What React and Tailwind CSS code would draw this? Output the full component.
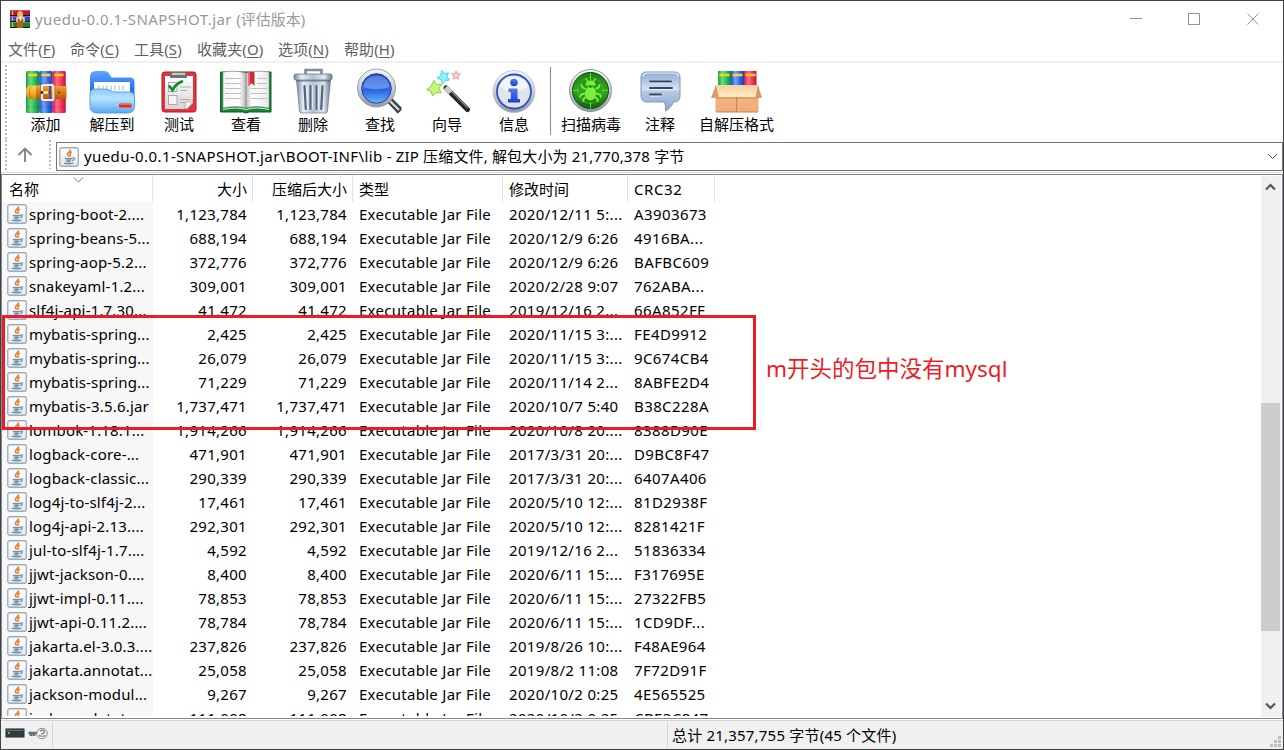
import React from "react";

const files = [
  ["spring-boot-2....", "1,123,784", "2020/12/11 5:...", "A3903673"],
  ["spring-beans-5...", "688,194", "2020/12/9 6:26", "4916BA..."],
  ["spring-aop-5.2...", "372,776", "2020/12/9 6:26", "BAFBC609"],
  ["snakeyaml-1.2...", "309,001", "2020/2/28 9:07", "762ABA..."],
  ["slf4j-api-1.7.30...", "41,472", "2019/12/16 2...", "66A852FF"],
  ["mybatis-spring...", "2,425", "2020/11/15 3:...", "FE4D9912"],
  ["mybatis-spring...", "26,079", "2020/11/15 3:...", "9C674CB4"],
  ["mybatis-spring...", "71,229", "2020/11/14 2...", "8ABFE2D4"],
  ["mybatis-3.5.6.jar", "1,737,471", "2020/10/7 5:40", "B38C228A"],
  ["lombok-1.18.1...", "1,914,266", "2020/10/8 20:...", "8388D90E"],
  ["logback-core-...", "471,901", "2017/3/31 20:...", "D9BC8F47"],
  ["logback-classic...", "290,339", "2017/3/31 20:...", "6407A406"],
  ["log4j-to-slf4j-2...", "17,461", "2020/5/10 12:...", "81D2938F"],
  ["log4j-api-2.13....", "292,301", "2020/5/10 12:...", "8281421F"],
  ["jul-to-slf4j-1.7....", "4,592", "2019/12/16 2...", "51836334"],
  ["jjwt-jackson-0....", "8,400", "2020/6/11 15:...", "F317695E"],
  ["jjwt-impl-0.11....", "78,853", "2020/6/11 15:...", "27322FB5"],
  ["jjwt-api-0.11.2....", "78,784", "2020/6/11 15:...", "1CD9DF..."],
  ["jakarta.el-3.0.3....", "237,826", "2019/8/26 10:...", "F48AE964"],
  ["jakarta.annotat...", "25,058", "2019/8/2 11:08", "7F72D91F"],
  ["jackson-modul...", "9,267", "2020/10/2 0:25", "4E565525"],
  ["jackson-dataty...", "111,008", "2020/10/2 0:25", "CBE3C847"],
];

const menus = [
  ["文件", "F", "w-[62px]"],
  ["命令", "C", "w-[64px]"],
  ["工具", "S", "w-[63px]"],
  ["收藏夹", "O", "w-[81px]"],
  ["选项", "N", "w-[66px]"],
  ["帮助", "H", "w-[60px]"],
];

function Gradients() {
  const g = (id, stops, horizontal) => (
    <linearGradient id={id} x1="0" y1="0" x2={horizontal ? "1" : "0"} y2={horizontal ? "0" : "1"}>
      {stops.map(([o, c]) => (
        <stop key={o} offset={o} stopColor={c} />
      ))}
    </linearGradient>
  );
  return (
    <svg className="absolute h-0 w-0" aria-hidden="true">
      <defs>
        {g("green", [[0, "#1fa045"], [0.35, "#5fe07d"], [0.7, "#24b852"], [1, "#128636"]], true)}
        {g("blue", [[0, "#2450d0"], [0.35, "#6fa5ff"], [0.7, "#2f63ea"], [1, "#1d40b4"]], true)}
        {g("red", [[0, "#d01c44"], [0.35, "#ff6f86"], [0.7, "#f0305a"], [1, "#bd1738"]], true)}
        {g("belt", [[0, "#f2a33c"], [0.4, "#e07f14"], [1, "#b05a0a"]])}
        {g("tongue", [[0, "#ffd257"], [0.6, "#f6a92b"], [1, "#d77f10"]])}
        {g("folderBack", [[0, "#5aa9ff"], [0.6, "#2d68ee"], [1, "#3a7cf0"]])}
        {g("folderFront", [[0, "#8cc9fc"], [0.4, "#b5e4ff"], [1, "#58a8ee"]])}
        {g("paper", [[0, "#ffffff"], [1, "#d4d4d4"]])}
        {g("pageL", [[0, "#f3f3f3"], [0.7, "#ffffff"], [1, "#b9b9b9"]], true)}
        {g("pageR", [[0, "#b9b9b9"], [0.25, "#ffffff"], [1, "#e9e9e9"]], true)}
        {g("steel", [[0, "#76869b"], [0.2, "#e6edf5"], [0.5, "#b4c1d0"], [0.8, "#dde6ef"], [1, "#68788d"]], true)}
        {g("lens", [[0, "#2147bd"], [0.45, "#3f78e8"], [0.55, "#2b62df"], [1, "#66b5ff"]])}
        {g("ring", [[0, "#f4f6f8"], [0.5, "#c9ced5"], [1, "#9199a4"]])}
        {g("bubble", [[0, "#8fabd2"], [0.45, "#d5e2f3"], [0.5, "#b5c9e5"], [1, "#8ba5cb"]])}
        {g("box", [[0, "#f2b888"], [1, "#f0ac78"]])}
        {g("flap", [[0, "#f6cfa0"], [1, "#fdebc4"]])}
        {g("infoBlue", [[0, "#4d80ea"], [1, "#1a3ed0"]])}
        {g("tile", [[0, "#ffffff"], [1, "#e4e9ed"]])}
        {g("radar", [[0, "#1c7d14"], [0.5, "#33a51e"], [1, "#146310"]])}
      </defs>
    </svg>
  );
}

const Pic = ({ children, box = "0 0 54 46" }) => (
  <svg width="54" height="46" viewBox={box} className="block shrink-0">
    {children}
  </svg>
);

const AddIcon = () => (
  <Pic box="1 0 54 46">
    <rect x="8" y="3" width="13.4" height="42" rx="1.5" fill="url(#green)" />
    <rect x="21.2" y="3" width="13.4" height="42" rx="1.5" fill="url(#blue)" />
    <rect x="34.4" y="3" width="13.4" height="42" rx="1.5" fill="url(#red)" />
    <path d="M10 7h9M23.5 7h9M36.5 7h9" stroke="#ffd21c" strokeWidth="2.4" />
    <path d="M8 39h13M21 39h13M34.5 39h13" stroke="#000" strokeOpacity=".12" />
    <rect x="33" y="18" width="15.5" height="13" rx="1" fill="url(#belt)" />
    <path d="M11 17.5h17v13.5H12q-4-2-4-6.7t3-6.8z" fill="url(#tongue)" />
    <path d="M13 18.5q-3.500 5.500 0 12" stroke="#b06a0a" strokeOpacity=".6" fill="none" />
    <rect x="18" y="18" width="13" height="13" fill="url(#belt)" />
    <rect x="24" y="17" width="11.5" height="15" rx="1.5" fill="none" stroke="#f3e9e5" strokeWidth="2.2" />
    <rect x="22.5" y="15.5" width="14.5" height="18" rx="2.5" fill="none" stroke="#83726f" strokeWidth=".7" />
    <path d="M25 24.5h5" stroke="#fff" strokeWidth="2.2" />
    <circle cx="24" cy="24.5" r="1.4" fill="#402509" />
    <circle cx="32" cy="24.5" r="1" fill="#65360a" />
    <circle cx="41" cy="24.5" r="1" fill="#65360a" />
  </Pic>
);

const FolderIcon = () => (
  <Pic>
    <path d="M5 9q0-6 6-6h8q4 0 6 4l1.500 2.500H45q4.500 0 4.500 5V35H5z" fill="url(#folderBack)" />
    <path d="M9 14h36v16H9z" fill="#fff" />
    <path d="M14 17.500v5M18 17.500v5M22 17.500v5M26 17.500v5M30 17.500v5M34 17.500v5M38 17.500v5" stroke="#aab5c2" />
    <path d="M5 26q0-5 5-5h9q3 0 6 1.500t6 1.500h13q5.500 0 5.500 5v9q0 7-7 7H12q-7 0-7-7z" fill="url(#folderFront)" stroke="#4292e2" strokeWidth=".8" />
    <rect x="34" y="35.5" width="12.5" height="4" rx="1" fill="#e02e1f" />
    <path d="M34.500 36.200h11.500" stroke="#ff8265" />
  </Pic>
);

const TestIcon = () => (
  <Pic>
    <rect x="10" y="4" width="34" height="40" rx="2.5" fill="#e03540" stroke="#b01822" />
    <path d="M13 8h28v27l-6 6H13z" fill="url(#paper)" />
    <path d="M41 31q-3 4-8 3.500 1.500 4-1 6.500 7-1 9-10z" fill="#f7f7f7" stroke="#999" strokeWidth=".6" />
    <path d="M18 10V6.500q0-2.500 2.500-2.500h12Q35 4 35 6.500V10z" fill="#727272" />
    <path d="M20 6h13" stroke="#ddd" strokeWidth="1.6" />
    <rect x="16.5" y="14.5" width="8.5" height="9" fill="#fff" stroke="#aaa" />
    <rect x="16.5" y="27.5" width="8.5" height="9" fill="#f4f4f4" stroke="#aaa" />
    <path d="M17 17.500l3.500 4.500Q24 15.500 31 13" fill="none" stroke="#128a31" strokeWidth="2.8" />
    <path d="M28 19h11M28 22.500h7M28 31.500h10M28 34.500h6" stroke="#a6a6a6" strokeWidth=".9" />
  </Pic>
);

const BookIcon = () => (
  <Pic>
    <path d="M1.500 4H52v40H30l-3 1-3-1H1.500z" fill="#168338" stroke="#0b5d24" />
    <path d="M4 4q13-2 23 1v35q-10-3-23 0z" fill="url(#pageL)" stroke="#888" strokeWidth=".6" />
    <path d="M50 4q-13-2-23 1v35q10-3 23 0z" fill="url(#pageR)" stroke="#888" strokeWidth=".6" />
    <path d="M4 41.500q13-3 23 0 10-3 23 0" fill="none" stroke="#e1eee3" />
    <path d="M6 10.500h16M6 15.500h16M6 20.500h16M6 25.500h16M6 30.500h16M38 10.500h10M32 20.500h16M32 25.500h16M32 30.500h16M38 15.500h10" stroke="#c0c0c0" />
    <path d="M29.500 4h6v14l-3-3-3 3z" fill="#cf2733" />
    <path d="M30.500 4v12" stroke="#ed6b6b" />
  </Pic>
);

const TrashIcon = () => (
  <Pic>
    <path d="M19.500 6V2h16v4" fill="none" stroke="#7e8c9e" strokeWidth="2.6" />
    <path d="M10.500 12h34l-3 31q0 2-2.500 2H16q-2.500 0-2.500-2z" fill="url(#steel)" stroke="#6c7a8d" strokeWidth=".7" />
    <path d="M18.500 18l1.300 23M24.500 18v23M30.500 18v23M36.500 18l-1.300 23" stroke="#566479" strokeWidth="2.2" strokeLinecap="round" />
    <path d="M20.700 19l1 22M26.300 18v23M32.300 18v23" stroke="#eff4fa" strokeWidth=".9" />
    <rect x="8" y="6" width="38" height="6" rx="1.8" fill="url(#steel)" stroke="#66778c" strokeWidth=".8" />
    <path d="M10.500 13h33" stroke="#37465a" strokeOpacity=".6" />
  </Pic>
);

const FindIcon = () => (
  <Pic box=".5 -.5 54 46">
    <path d="M33 32l4.500-4.500L49 39q1 3-4 6z" fill="#3b3f47" />
    <path d="M36 31l10.500 10.500" stroke="#d2d6dc" strokeWidth="2.4" />
    <circle cx="24" cy="19.5" r="19" fill="url(#ring)" stroke="#828a94" strokeWidth=".8" />
    <circle cx="24" cy="20" r="14.8" fill="url(#lens)" stroke="#1a3897" strokeWidth=".9" />
    <path d="M11.500 18.500Q12 8 24 7q12 1 12.500 11.500Q24 23 11.500 18.500z" fill="#9cc0ff" fillOpacity=".4" />
  </Pic>
);

const WizardIcon = () => (
  <Pic box="-.5 0 54 46">
    <path d="M25.500 20l21.500 21.500" stroke="#262626" strokeWidth="5.2" strokeLinecap="round" />
    <path d="M27 19.500l20.500 20.500" stroke="#8d8d8d" strokeWidth="1.2" />
    <path d="M25 19.500l5 5" stroke="#c9c9c9" strokeWidth="5" />
    <path d="M13.500 12.500l2.600 4.200 4.900-.7-2.500 4.500 2.200 4.500-5-.7-3.700 3.600-1.400-4.700-4.500-1.600 4.200-2.800z" fill="#c6f97a" stroke="#79d43a" />
    <path d="M21.500 2.500l2.400 3.200 4.100-1-1.500 4 2.400 3.400-4.200.3-2.800 3.200-1.400-4-4-1.500 3.500-2.300z" fill="#8cf2ff" stroke="#4fd0ea" />
    <path d="M35.500 3l1.200 2.700 3.300.1-2.400 2.200.6 3.200-2.700-1.600-3 1.500.8-3.100-2.300-2.200 3.200-.2z" fill="#ffcaca" stroke="#f0a0a0" />
  </Pic>
);

const InfoIcon = () => (
  <Pic box="0 0 54 46">
    <circle cx="27" cy="23.5" r="21" fill="url(#ring)" stroke="#b3b9c0" strokeWidth=".7" />
    <circle cx="27" cy="23.5" r="17" fill="#e0e5ec" stroke="#2c51c5" strokeWidth="1.8" />
    <path d="M13 19q14 9 28 0Q38 9 27 8.500T13 19z" fill="#fff" fillOpacity=".6" />
    <circle cx="27" cy="14.5" r="3.8" fill="url(#infoBlue)" />
    <path d="M21.500 20.500h9V31h2.500v3.500H21V31h2.800v-7h-2.300z" fill="url(#infoBlue)" />
  </Pic>
);

const VirusIcon = () => (
  <Pic>
    <circle cx="26.5" cy="22.5" r="21" fill="url(#ring)" stroke="#777f89" strokeWidth=".8" />
    <circle cx="26.5" cy="22.5" r="18" fill="url(#radar)" stroke="#0c4c0b" />
    <circle cx="26.5" cy="22.5" r="13" fill="none" stroke="#55c637" strokeWidth=".6" />
    <path d="M26.500 5v7M26.500 34v6.500M9 22.500h6M38 22.500h6" stroke="#56dc31" strokeWidth="1" />
    <path d="M21.500 21l-3-1.500-1.500-3M31.500 21l3-1.500 1.500-3M21 25.500l-4 1-1 3M32 25.500l4 1 1 3M22 29l-2.500 2v3M31 29l2.500 2v3" fill="none" stroke="#7bf03c" strokeWidth="1.9" />
    <ellipse cx="26.5" cy="25.5" rx="5.5" ry="7" fill="#7bf03c" />
    <path d="M21.500 17.500q0-5 5-5t5 5z" fill="#7bf03c" />
    <path d="M23.500 13l-2-2.500M29.500 13l2-2.500" stroke="#7bf03c" strokeWidth="1.3" />
    <circle cx="26.5" cy="18.5" r="1.6" fill="#239a16" />
  </Pic>
);

const CommentIcon = () => (
  <Pic>
    <path d="M13 4h28q6 0 6 6v18q0 6-6 6h-1q0 4-7.500 9 .5-5-1-9H14q-6 0-6-6V10q0-6 5-6z" fill="url(#bubble)" stroke="#7f97ba" />
    <path d="M10 8q1-3 4-3h26q5 0 5.500 4" fill="none" stroke="#e9f2ff" strokeWidth="1.1" />
    <path d="M17 13.500h21M17 20h22M17 26.500h11" stroke="#394765" strokeWidth="1.8" strokeLinecap="round" />
    <path d="M17 15.200h21M17 21.700h22M17 28.200h11" stroke="#eef4ff" strokeWidth=".8" />
  </Pic>
);

const SfxIcon = () => (
  <Pic>
    <rect x="8" y="3" width="13" height="20" fill="url(#green)" />
    <rect x="21" y="3" width="13" height="20" fill="url(#blue)" />
    <rect x="34" y="3" width="12.5" height="20" fill="url(#red)" />
    <path d="M9.500 7h10M22.500 7h10M35.500 7h10" stroke="#ffd21c" strokeWidth="2.4" />
    <path d="M5.500 17.500h43V44h-43z" fill="url(#box)" />
    <path d="M6 27h42v4H6z" fill="#d98f58" fillOpacity=".6" />
    <path d="M6 17h42l-1.500 12h-38z" fill="url(#flap)" />
    <path d="M6 17L1 30h3.500l4-1zM48 17l4 13h-3.500l-3-1z" fill="#dd9760" />
    <path d="M27 29v15" stroke="#a9683c" />
    <path d="M28 29.500v14.500" stroke="#ffd1a3" strokeWidth=".7" />
    <path d="M6 44h42" stroke="#ca824c" />
  </Pic>
);

const JavaIcon = () => (
  <svg width="20" height="20" viewBox="0 0 20 20" className="block shrink-0">
    <rect x=".75" y=".75" width="18.5" height="18.5" rx="2" fill="url(#tile)" stroke="#98adbf" strokeWidth="1.3" />
    <path d="M11 2.500q.8 1.700-1.600 3.200-2 1.700.4 4M12.700 5q-2.600 1.200-1.500 2.600.7 1-.6 2.100" fill="none" stroke="#ea8236" strokeWidth="1.6" />
    <path d="M6 11.300q3.500.9 7.500 0M6.700 13q2.800.8 5.600 0M7.200 14.700q2.400.6 4.600 0M5 16.200q5 1.300 9.500-.2" fill="none" stroke="#6a8aa5" strokeWidth="1.3" />
    <path d="M13.600 11q2.400-.4 1.800 1-.5 1.200-2.300 1.600" fill="none" stroke="#6a8aa5" strokeWidth="1.1" />
  </svg>
);

const AppIcon = () => (
  <svg width="20" height="18" viewBox="0 0 20 18" className="block">
    <rect width="20" height="6" fill="#b31b3b" />
    <rect y="6" width="20" height="6" fill="#3547b5" />
    <rect y="12" width="20" height="6" fill="#168326" />
    <path d="M0 .5h20M0 6.500h20M0 12.500h20" stroke="#fff" strokeOpacity=".25" />
    <path d="M0 5.500h20M0 11.500h20M0 17.500h20" stroke="#181021" strokeWidth="1" />
    <path d="M2.500 1v4M2.500 7v4M2.500 13v4" stroke="#eebd23" strokeWidth="1.3" />
    <path d="M7 18V4q0-3 3-3t3 3v14z" fill="#b76117" />
    <path d="M7.500 7V4q0-3 2.500-3t3 3v3z" fill="#f2bc42" />
    <path d="M7 12V8h7v4" fill="none" stroke="#ece6e2" strokeWidth="1.4" />
    <path d="M10.500 6v5" stroke="#fff" strokeWidth="1.2" />
  </svg>
);

const tools = [
  ["添加", AddIcon, "w-[67px]"],
  ["解压到", FolderIcon, "w-[66px]"],
  ["测试", TestIcon, "w-[68px]"],
  ["查看", BookIcon, "w-[66px]"],
  ["删除", TrashIcon, "w-[68px]"],
  ["查找", FindIcon, "w-[66px]"],
  ["向导", WizardIcon, "w-[68px]"],
  ["信息", InfoIcon, "w-[66px]"],
];
const tools2 = [
  ["扫描病毒", VirusIcon, "w-[78px]"],
  ["注释", CommentIcon, "w-[60px]"],
  ["自解压格式", SfxIcon, "w-[93px]"],
];

const ToolButton = ({ label, Icon, width }) => (
  <button className={`flex ${width} flex-col items-center pt-[5px]`}>
    <Icon />
    <span className="whitespace-nowrap leading-[21px]">{label}</span>
  </button>
);

const Gripper = ({ className }) => (
  <div
    className={`w-0.5 shrink-0 bg-[repeating-linear-gradient(to_bottom,#bdbdbd_0px,#bdbdbd_2px,transparent_2px,transparent_4px)] ${className}`}
  />
);

const head = "shrink-0 border-r border-[#e2e2e2] pt-[4px] leading-[21px]";

export default function App() {
  return (
    <div className="relative flex h-[750px] w-[1284px] flex-col overflow-hidden border border-[#424145] bg-white font-['Noto_Sans','Noto_Sans_CJK_SC',sans-serif] text-[15px] text-black">
      <Gradients />
      <header className="flex h-9 shrink-0 items-center justify-between pl-[9px] text-[#999]">
        <div className="flex items-center gap-[5px]">
          <AppIcon />
          <span className="whitespace-nowrap">
            <span className="tracking-[0.45px]">yuedu-0.0.1-SNAPSHOT.jar </span>
            <span>(评估版本)</span>
          </span>
        </div>
        <svg width="152" height="36" viewBox="0 0 152 36" fill="none" stroke="#919191" className="overflow-visible">
          <path d="M-1 17.500h12M57.500 12.500h11v11h-11zM116.500 12.500l11 11M127.500 12.500l-11 11" />
        </svg>
      </header>
      <nav className="flex h-6 shrink-0 items-center pl-[7px] text-[#5f5f5f]">
        {menus.map(([label, key, width]) => (
          <span key={key} className={`${width} shrink-0 whitespace-nowrap tracking-[0.1px]`}>
            {label}(<span className="underline underline-offset-2">{key}</span>)
          </span>
        ))}
      </nav>
      <div className="flex h-[113px] shrink-0 flex-col border-t-2 border-[#f0f0f0]">
        <div className="flex h-[77px] shrink-0">
          <Gripper className="ml-1 mt-0.5" />
          <div className="ml-[5px] flex">
            {tools.map(([label, Icon, width]) => (
              <ToolButton key={label} label={label} Icon={Icon} width={width} />
            ))}
          </div>
          <div className="ml-[3px] mt-1 h-[68px] w-px bg-[#8b8b8b]" />
          <div className="ml-px flex">
            {tools2.map(([label, Icon, width]) => (
              <ToolButton key={label} label={label} Icon={Icon} width={width} />
            ))}
          </div>
        </div>
        <div className="flex h-[31px] shrink-0">
          <Gripper className="ml-1" />
          <div className="flex w-[42px] items-center justify-center pb-px pr-[6px]">
            <svg width="16" height="16" viewBox="0 0 16 16" fill="none" stroke="#858585" strokeWidth="1.9">
              <path d="M8 15V2M1.500 8L8 1.500 14.500 8" />
            </svg>
          </div>
          <Gripper className="mb-0.5" />
          <div className="ml-[5px] mt-0.5 flex h-[29px] flex-1 items-center border border-[#777] pl-[2px] pr-1">
            <JavaIcon />
            <span className="ml-[5px] flex-1 whitespace-nowrap">
              <span className="tracking-[0.4px]">yuedu-0.0.1-SNAPSHOT.jar\BOOT-INF\lib</span>
              <span className="tracking-[0.16px]"> - ZIP 压缩文件, 解包大小为 21,770,378 字节</span>
            </span>
            <svg width="11" height="7" viewBox="0 0 11 7" fill="none" stroke="#555">
              <path d="M1 1l4.500 4.500L10 1" />
            </svg>
          </div>
        </div>
        <div className="mt-px h-px bg-[#dcdcdc]" />
      </div>
      <main className="relative flex h-[545px] shrink-0 border border-[#828790]">
        <div className="flex flex-1 flex-col overflow-hidden">
          <div className="relative flex h-[27px] shrink-0">
            <div className={`${head} w-[151px] pl-[7px]`}>名称</div>
            <div className={`${head} w-[100px] pr-[5px] text-right`}>大小</div>
            <div className={`${head} w-[100px] pr-[5px] text-right`}>压缩后大小</div>
            <div className={`${head} w-[150px] pl-[6px]`}>类型</div>
            <div className={`${head} w-[125px] pl-[6px]`}>修改时间</div>
            <div className={`${head} w-[87px] pl-[6px] tracking-[0.6px]`}>CRC32</div>
            <svg className="absolute left-[71px] top-[2px]" width="11" height="6" viewBox="0 0 11 6" fill="none" stroke="#777">
              <path d="M1 .5l4.500 4.500L10 .5" />
            </svg>
          </div>
          <div className="h-[514px] overflow-hidden">
            {files.map(([name, size, date, crc]) => (
              <div key={crc} className="flex h-6 items-center whitespace-nowrap leading-6">
                <div className="flex w-[151px] shrink-0 items-center gap-[2px] bg-[#f7f7f7] pl-[5px]">
                  <JavaIcon />
                  <span className="tracking-[0.18px]">{name}</span>
                </div>
                <div className="w-[100px] shrink-0 pr-[6px] text-right tracking-[0.3px]">{size}</div>
                <div className="w-[100px] shrink-0 pr-[6px] text-right tracking-[0.3px]">{size}</div>
                <div className="w-[150px] shrink-0 pl-[6px] tracking-[0.28px]">Executable Jar File</div>
                <div className="w-[125px] shrink-0 pl-[6px] tracking-[0.33px]">{date}</div>
                <div className="w-[87px] shrink-0 pl-[6px] tracking-[0.4px]">{crc}</div>
              </div>
            ))}
          </div>
        </div>
        <div className="mr-px mb-px mt-px flex w-5 shrink-0 flex-col items-center bg-[#f0f0f0]">
          <svg className="mt-[7px] mr-px" width="11" height="8" viewBox="0 0 11 8" fill="none" stroke="#555" strokeWidth="2.2">
            <path d="M1 6.500l4.500-4.500L10 6.500" />
          </svg>
          <div className="mt-[212px] h-[228px] w-[19px] self-start bg-[#cdcdcd]" />
          <svg className="mt-[71px] mr-px" width="11" height="8" viewBox="0 0 11 8" fill="none" stroke="#555" strokeWidth="2.2">
            <path d="M1 1.500l4.500 4.500L10 1.500" />
          </svg>
        </div>
      </main>
      <footer className="flex h-[30px] shrink-0 border-t border-white bg-[#f0f0f0]">
        <div className="flex flex-1 border-t border-[#d5d5d5]">
          <div className="flex w-[51px] shrink-0 items-start gap-[3px] pl-1 pt-[6px]">
            <svg width="20" height="12" viewBox="0 0 20 12">
              <rect x=".5" y="1.5" width="19" height="9" rx="1" fill="#303b3f" stroke="#7d8589" />
              <path d="M2 3.500h16" stroke="#647176" />
              <circle cx="4" cy="6" r="1" fill="#99d657" />
            </svg>
            <svg width="20" height="13" viewBox="0 0 20 13" fill="none">
              <path d="M.5 6h10M3 6v3M6 6v3" stroke="#666e73" strokeWidth="2.6" />
              <circle cx="14" cy="6.5" r="5.2" fill="#f2f4f5" stroke="#858c91" />
              <path d="M12 4.500q1-1.800 3-1.200T16 6l-3 1M17.500 8.500q-3 1.500-6.500 0" stroke="#63717a" strokeWidth="1.2" />
            </svg>
          </div>
          <div className="mt-px h-[26px] w-px bg-[#d4d4d4]" />
          <div className="w-[614px]" />
          <div className="mt-px h-[26px] w-px bg-[#d4d4d4]" />
          <div className="flex-1 pl-1 pt-[4px] leading-[21px] tracking-[0.2px]">总计 21,357,755 字节(45 个文件)</div>
          <svg className="mr-[1px] mt-[15px]" width="12" height="12" viewBox="0 0 12 12" fill="#bdbdbd">
            <path d="M8 0h3v3H8zM4 4h3v3H4zM8 4h3v3H8zM0 8h3v3H0zM4 8h3v3H4zM8 8h3v3H8z" />
          </svg>
        </div>
      </footer>
      <div className="absolute left-px top-[314px] h-[115px] w-[754px] border-[3px] border-[#ed1c24]" />
      <div className="absolute left-[765px] top-[352px] whitespace-nowrap text-[22.5px] leading-8 text-[#ed1c24]">
        m开头的包中没有mysql
      </div>
    </div>
  );
}
